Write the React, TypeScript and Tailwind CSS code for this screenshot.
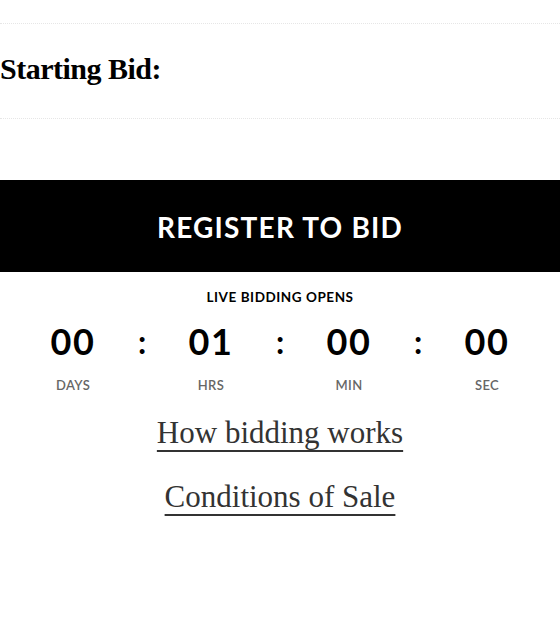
const serif = "font-['Liberation_Serif','Times_New_Roman',serif]";
const sans = "font-['Lato','Liberation_Sans',sans-serif]";

const units = [
    {value: "00", label: "DAYS"},
    {value: "01", label: "HRS"},
    {value: "00", label: "MIN"},
    {value: "00", label: "SEC"},
];

export default function App() {
    return (
        <div className="w-[560px] h-[620px] bg-white overflow-hidden">
            <div className="h-[23px]" />
            <div className="border-t border-b border-dotted border-[#e6e6e6] h-[96px] flex items-center">
                <h2 className={`${serif} text-[30px] font-bold text-black leading-none -mt-[4px] tracking-[-0.5px]`}>
                    Starting Bid:
                </h2>
            </div>

            <div className="mt-[61px] h-[92px] bg-black flex items-center justify-center">
                <span className={`${sans} text-white text-[28px] font-bold tracking-[1.2px] leading-none mt-[1px]`}>
                    REGISTER TO BID
                </span>
            </div>

            <p className={`${sans} mt-[19px] text-center text-[13.5px] font-bold tracking-[0.55px] text-black leading-none`}>
                LIVE BIDDING OPENS
            </p>

            <div className="mt-[18px] px-[4px] grid grid-cols-4">
                {units.map((u, i) => (
                    <div key={u.label} className="relative flex flex-col items-center">
                        <span className={`${sans} text-[36px] font-bold leading-none text-black tracking-[1.5px]`}>
                            {u.value}
                        </span>
                        <span className={`${sans} mt-[20px] text-[13px] font-semibold tracking-[0.4px] leading-none text-[#666]`}>
                            {u.label}
                        </span>
                        {i > 0 && (
                            <span className={`${sans} absolute left-0 top-[3px] -translate-x-1/2 text-[32px] font-bold leading-none text-black`}>
                                :
                            </span>
                        )}
                    </div>
                ))}
            </div>

            <div className={`${serif} mt-[21px] flex flex-col items-center gap-[25px] text-[31px] text-[#333] leading-[39px]`}>
                <a href="#" className="underline decoration-[2px] underline-offset-[7px] decoration-[#333]">
                    How bidding works
                </a>
                <a href="#" className="underline decoration-[2px] underline-offset-[7px] decoration-[#333]">
                    Conditions of Sale
                </a>
            </div>
        </div>
    );
}
